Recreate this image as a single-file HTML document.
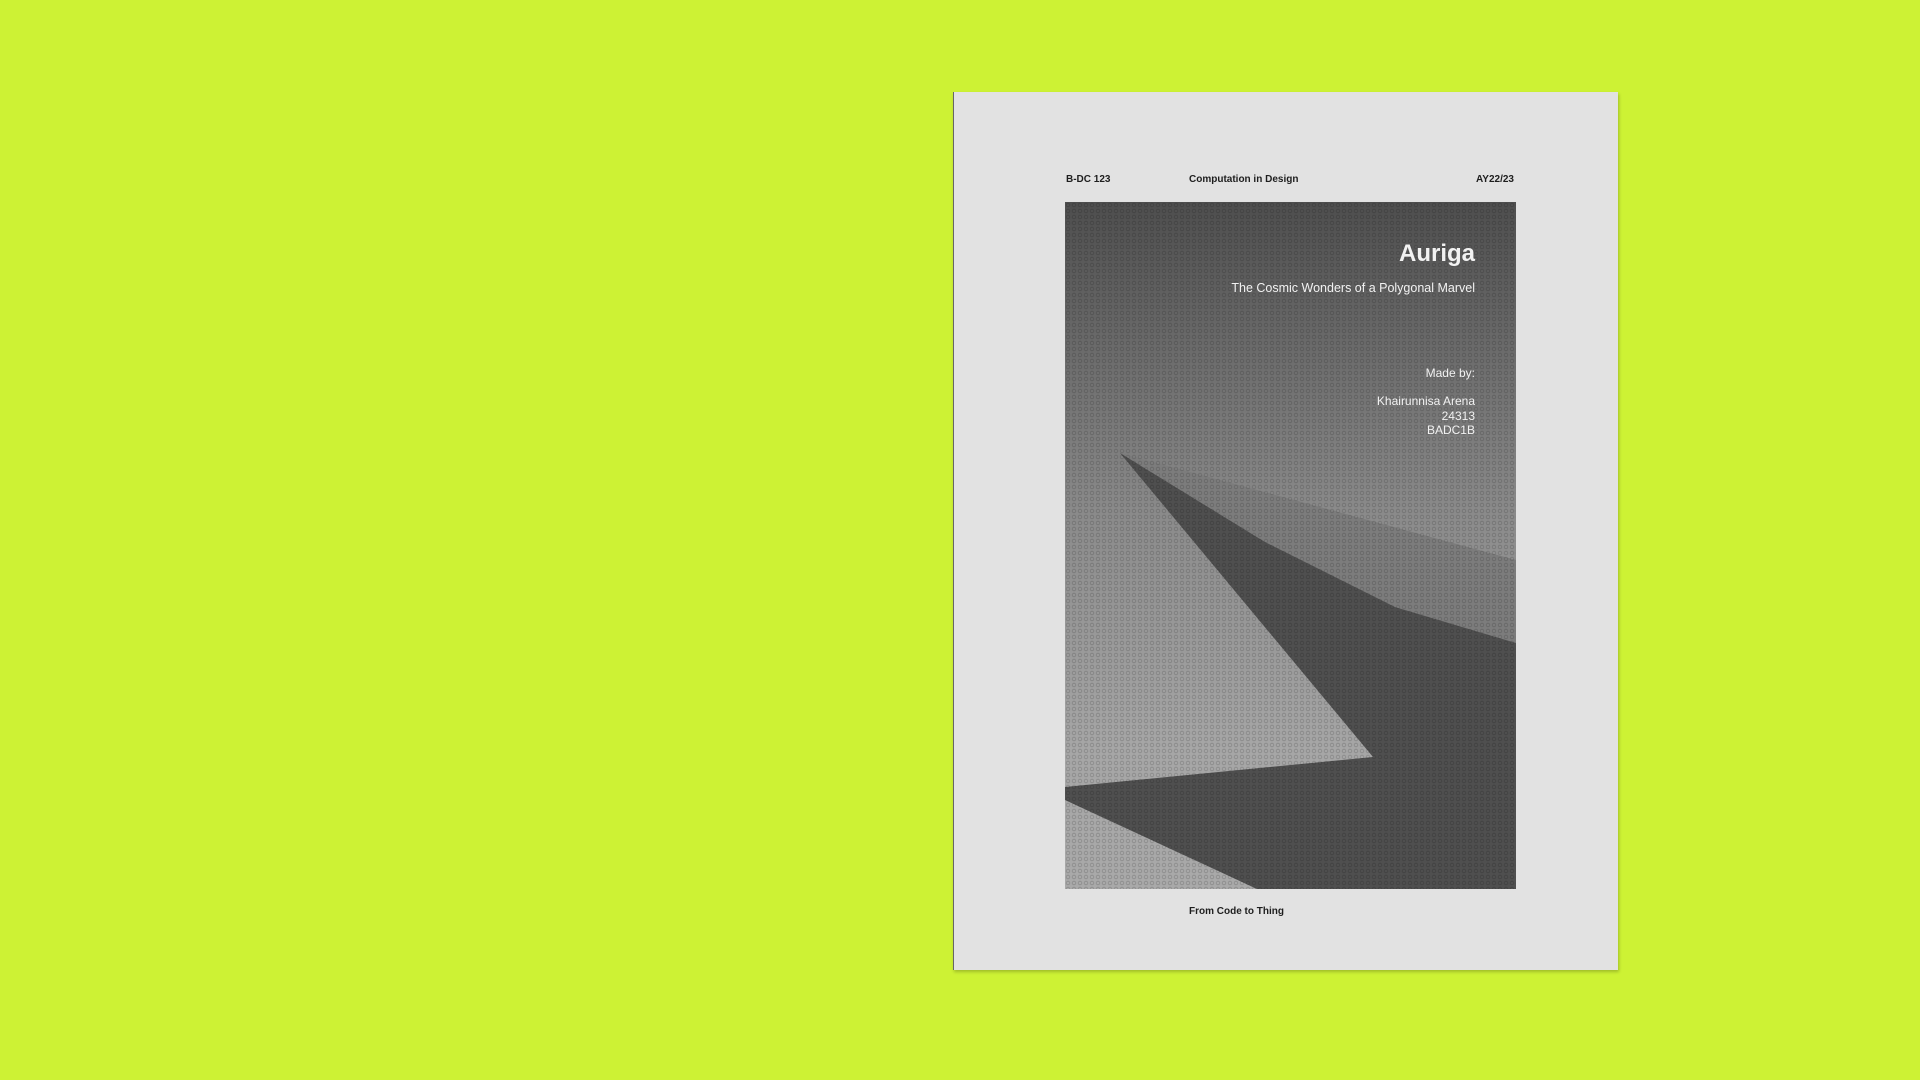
<!DOCTYPE html>
<html><head><meta charset="utf-8"><style>
html,body{margin:0;padding:0}
body{width:1920px;height:1080px;background:#cdf234;position:relative;overflow:hidden;font-family:"Liberation Sans",sans-serif}
.book{position:absolute;left:953px;top:92px;width:664px;height:878px;background:#e2e2e2;box-shadow:1px 2px 3px rgba(0,0,0,.22);border-left:1px solid #666}
.t{position:absolute;font-size:10px;font-weight:bold;color:#1e1e1e;top:82px}
.img{position:absolute;left:111px;top:110px;width:451px;height:687px;overflow:hidden}
.w{position:absolute;color:#f2f2f2;right:41px;text-align:right}
</style></head><body>
<div class="book">
<div class="t" style="left:112px">B-DC 123</div>
<div class="t" style="left:235px">Computation in Design</div>
<div class="t" style="right:104px">AY22/23</div>
<div class="img">
<svg width="451" height="687" viewBox="0 0 451 687">
<defs>
<linearGradient id="g" x1="0" y1="0" x2="0" y2="1">
<stop offset="0" stop-color="#4e4e4e"/><stop offset=".45" stop-color="#8a8a8a"/><stop offset=".8" stop-color="#a6a6a6"/><stop offset="1" stop-color="#a9a9a9"/></linearGradient>
<pattern id="p" width="6" height="6" patternUnits="userSpaceOnUse"><circle cx="3" cy="3" r="1.8" fill="none" stroke="rgba(0,0,0,.18)" stroke-width="0.8"/></pattern>
</defs>
<rect width="451" height="687" fill="url(#g)"/>
<polygon points="55,251 451,358 451,441 330,405 200,340" fill="#7c7c7c"/>
<polygon points="55,251 200,340 330,405 451,441 451,687 192,687 0,598 0,585 308,555" fill="#4f4f4f"/>
<rect width="451" height="687" fill="url(#p)"/>
</svg>
<div class="w" style="top:38px;font-size:24px;font-weight:bold">Auriga</div>
<div class="w" style="top:79px;font-size:12.5px">The Cosmic Wonders of a Polygonal Marvel</div>
<div class="w" style="top:164px;font-size:12px">Made by:</div>
<div class="w" style="top:192px;font-size:12px;line-height:14.5px">Khairunnisa Arena<br>24313<br>BADC1B</div>
</div>
<div class="t" style="left:235px;top:814px">From Code to Thing</div>
</div>
</body></html>
